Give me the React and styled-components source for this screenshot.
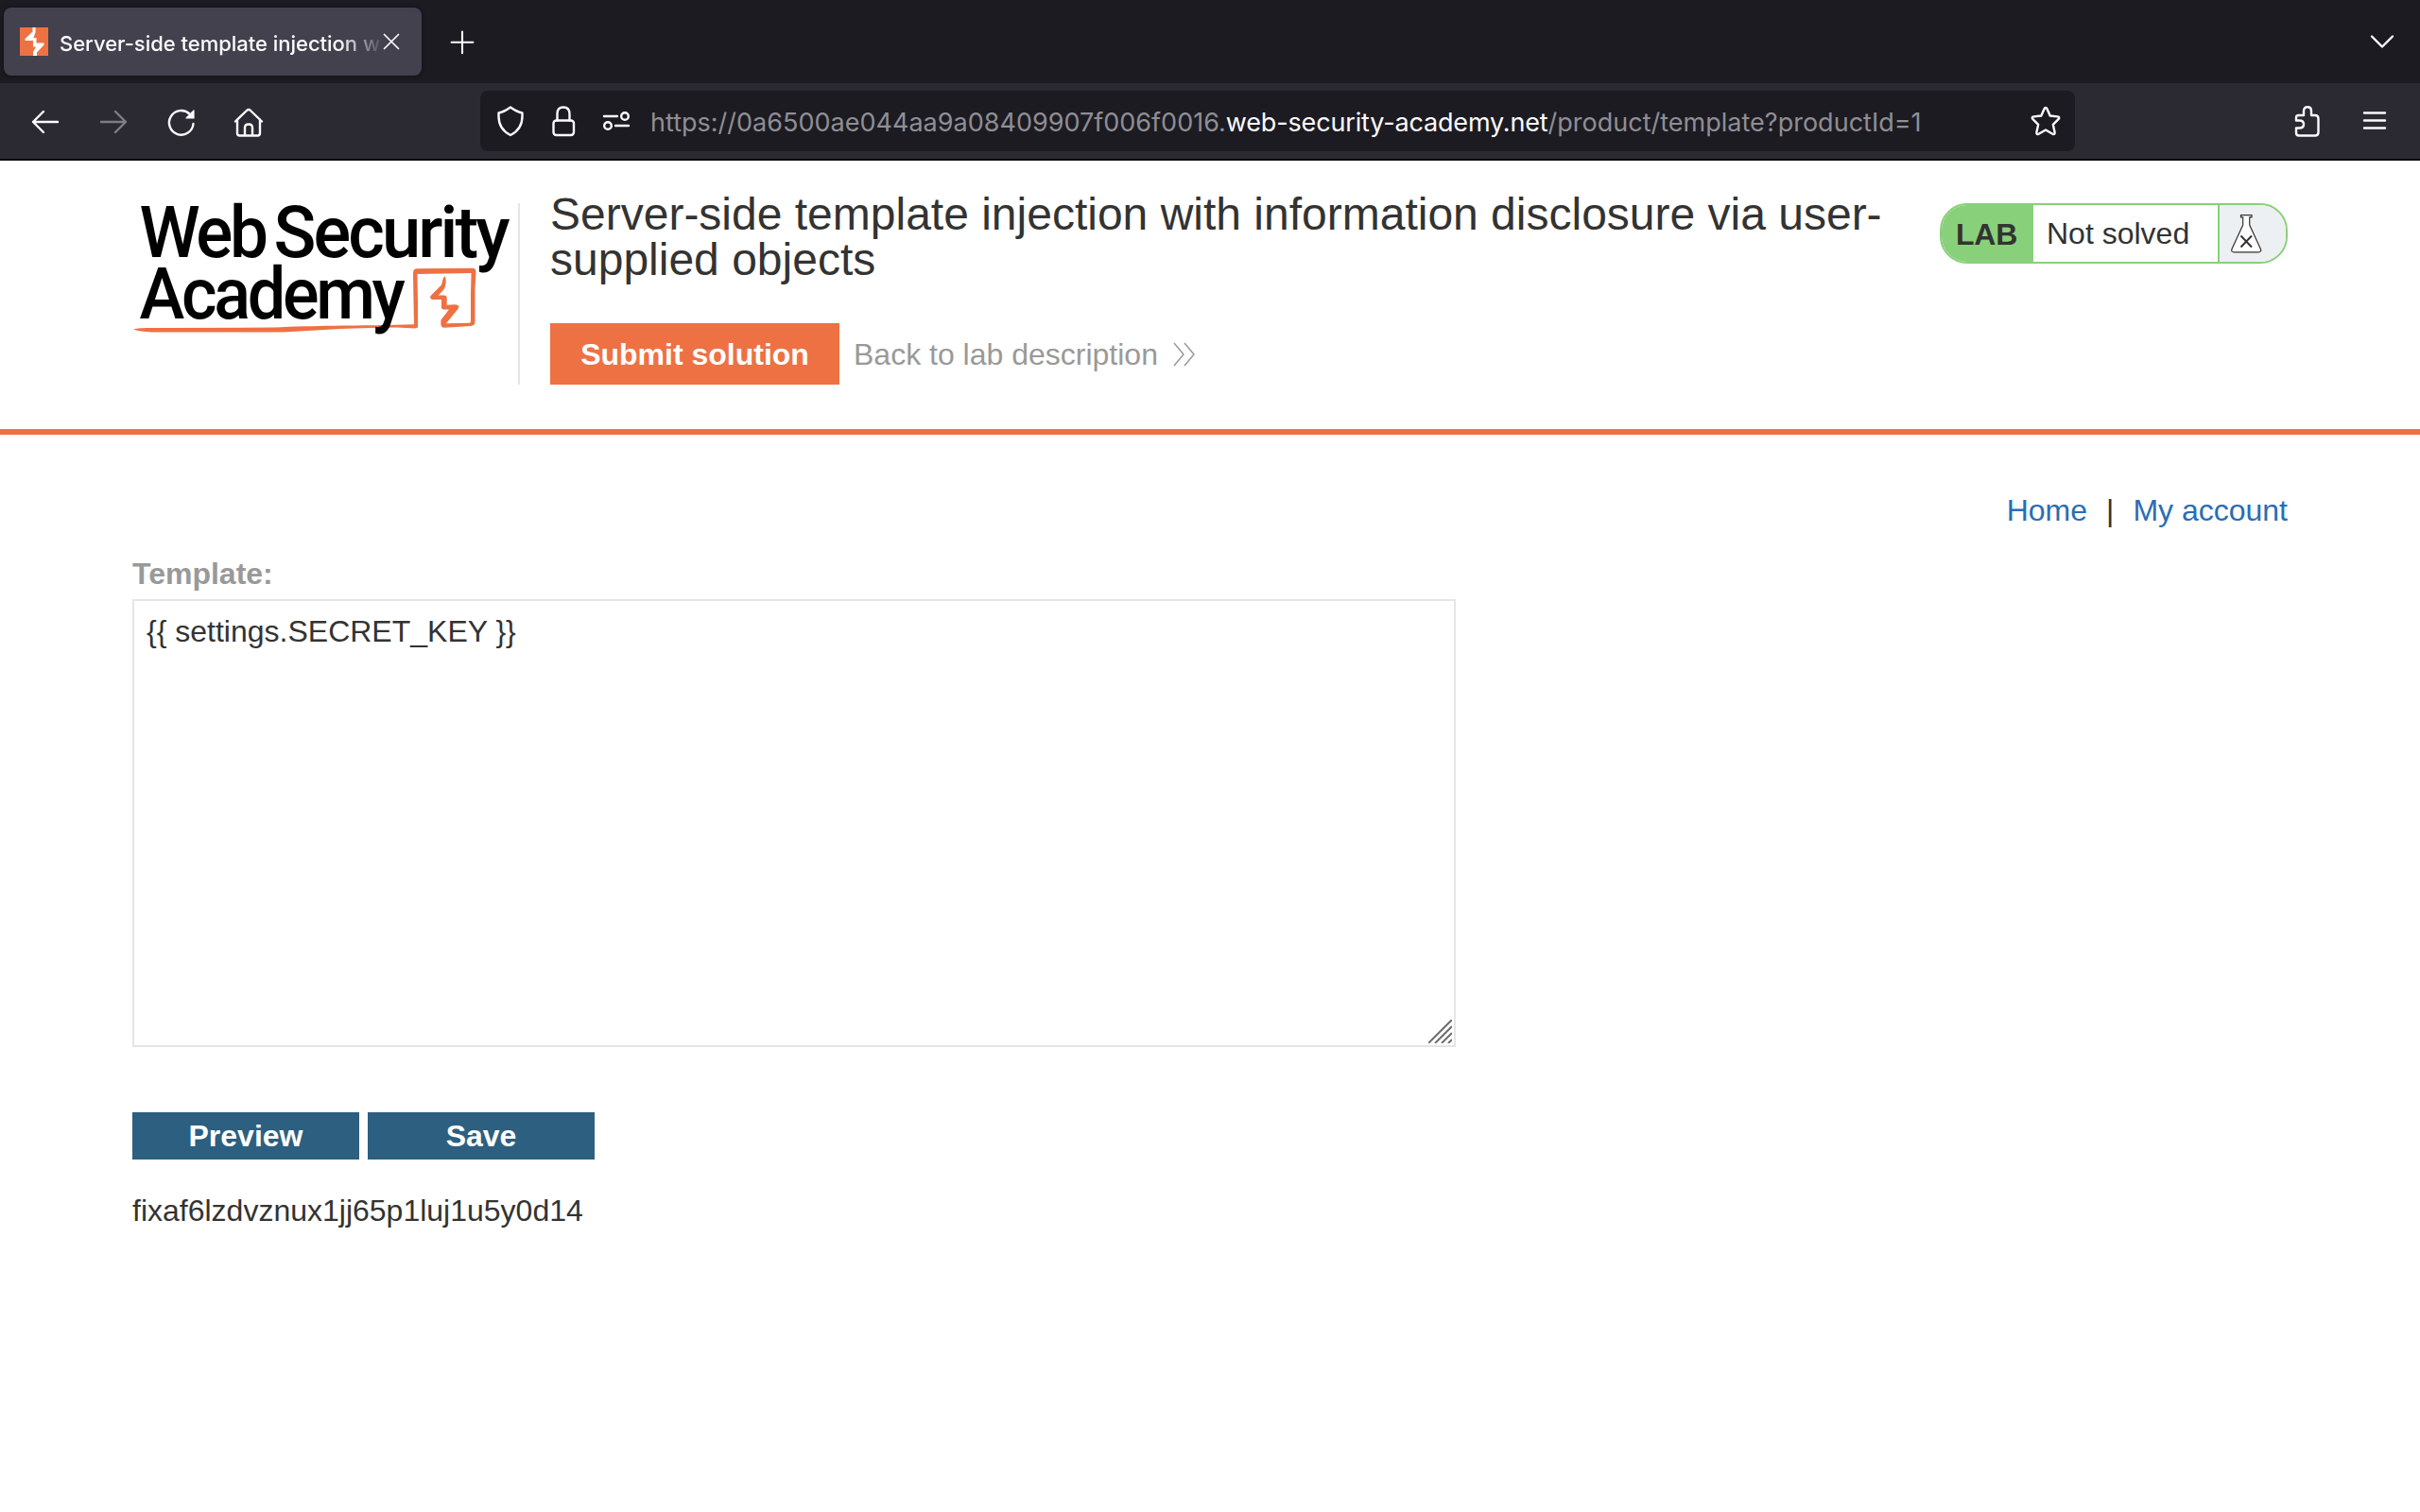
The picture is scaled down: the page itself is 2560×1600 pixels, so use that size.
import React from "react";
import styled, { createGlobalStyle } from "styled-components";

const ORANGE = "#ee7144";
const GREEN = "#89d07a";
const INK = "#333332";

const GlobalStyle = createGlobalStyle`
  *, *::before, *::after { box-sizing: border-box; }
  html, body { margin: 0; padding: 0; background: #fff; }
  body {
    font-family: "Liberation Sans", Arial, sans-serif;
    font-size: 32px;
    line-height: 36px;
    color: ${INK};
  }
  button, textarea { font: inherit; }
  svg { display: block; flex: none; overflow: visible; }
`;

const Window = styled.div`
  width: 2560px;
  height: 1600px;
  display: flex;
  flex-direction: column;
  overflow: hidden;
  background: #fff;
`;

const TabStrip = styled.div`
  height: 88px;
  flex: none;
  display: flex;
  align-items: center;
  padding: 0 24px 0 4px;
  background: #1c1b22;
  color: #fbfbfe;
`;

const Tab = styled.div`
  width: 442px;
  height: 72px;
  display: flex;
  align-items: center;
  padding-left: 17px;
  border-radius: 8px;
  background: #42414d;
  box-shadow: 0 0 4px rgba(0, 0, 0, 0.5);
`;

const TabTitle = styled.span`
  width: 341px;
  height: 30px;
  margin: 4px 0 0 12px;
  overflow: hidden;
  white-space: nowrap;
  font: 500 22px/30px Inter, Roboto, sans-serif;
  letter-spacing: -0.02px;
  mask-image: linear-gradient(to right, #000 296px, transparent 344px);
`;

const NewTab = styled.div`
  margin-left: 30px;
  flex: 1;
`;

const Toolbar = styled.div`
  height: 82px;
  flex: none;
  display: flex;
  align-items: center;
  padding: 0 32px 0 32px;
  background: #2b2a33;
  border-bottom: 2px solid #0c0c0d;
  color: #fbfbfe;
`;

const NavButtons = styled.div`
  display: flex;
  gap: 40px;
  width: 476px;
`;

const AddressBar = styled.div`
  width: 1687px;
  height: 64px;
  display: flex;
  align-items: center;
  padding: 0 15px 0 16px;
  border-radius: 8px;
  background: #1c1b22;
`;

const SiteIcons = styled.div`
  display: flex;
  gap: 24px;
`;

const Address = styled.span`
  flex: 1;
  margin: 4px 0 0 20px;
  white-space: nowrap;
  font: 400 27px/36px Inter, Roboto, sans-serif;
  letter-spacing: 0.01px;
  color: #8f8e94;
`;

const Host = styled.span`
  color: #fbfbfe;
  letter-spacing: -0.16px;
`;

const ToolbarEnd = styled.div`
  flex: 1;
  display: flex;
  justify-content: flex-end;
  gap: 40px;
`;

const Header = styled.header`
  height: 290px;
  flex: none;
  display: flex;
  align-items: flex-start;
  padding: 32px 140px 0 140px;
  border-bottom: 6px solid ${ORANGE};
`;

const LogoBox = styled.div`
  width: 410px;
  height: 192px;
  margin-top: 13px;
  border-right: 2px solid #e5e5e5;
`;

const Headline = styled.div`
  width: 1470px;
  margin-left: 32px;
`;

const Title = styled.h2`
  margin: 1px 0 0;
  font-size: 48px;
  line-height: 48px;
  font-weight: 400;
`;

const Actions = styled.div`
  display: flex;
  align-items: center;
  margin-top: 43px;
`;

const SubmitButton = styled.button`
  width: 306px;
  height: 65px;
  padding: 1px 0 0;
  border: 0;
  background: ${ORANGE};
  color: #fff;
  font-weight: 700;
`;

const BackLink = styled.a`
  display: flex;
  align-items: center;
  gap: 16px;
  margin: 1px 0 0 15px;
  color: #999;
`;

const LabStatus = styled.div`
  width: 368px;
  height: 64px;
  display: flex;
  margin-top: 13px;
  border: 2px solid ${GREEN};
  border-radius: 29px;
  overflow: hidden;
`;

const LabTag = styled.div`
  width: 97px;
  padding: 13px 0 0 15px;
  background: ${GREEN};
  font-weight: 700;
  letter-spacing: -0.2px;
`;

const LabText = styled.div`
  width: 197px;
  padding: 12px 0 0 14px;
  border-right: 2px solid ${GREEN};
`;

const LabIcon = styled.div`
  flex: 1;
  padding: 9px 0 0 12px;
  background: #ecf0f3;
`;

const Main = styled.main`
  flex: 1;
  padding: 62px 140px 0;
  display: flex;
  flex-direction: column;
`;

const TopLinks = styled.nav`
  display: flex;
  justify-content: flex-end;
  gap: 20px;
`;

const Link = styled.a`
  color: #2a6db5;
`;

const Label = styled.label`
  margin-top: 31px;
  font-weight: 700;
  color: #999;
`;

const Editor = styled.div`
  width: 1400px;
  height: 474px;
  margin-top: 9px;
  padding: 14px 2px 2px 13px;
  display: flex;
  flex-direction: column;
  justify-content: space-between;
  border: 2px solid #e5e5e5;
`;

const Grip = styled.svg`
  align-self: flex-end;
  overflow: hidden;
`;

const ButtonRow = styled.div`
  display: flex;
  gap: 9px;
  margin-top: 69px;
`;

const ActionButton = styled.button`
  width: 240px;
  height: 50px;
  padding: 0;
  border: 0;
  background: #2c5f80;
  color: #fff;
  font-weight: 700;
  line-height: 50px;
`;

const Output = styled.div`
  margin-top: 36px;
`;

const Icon = ({ size = 32, width = 2.4, opacity = 1, children }) => (
  <svg
    width={size}
    height={size}
    viewBox="0 0 32 32"
    fill="none"
    stroke="currentColor"
    strokeWidth={width}
    strokeLinecap="round"
    strokeLinejoin="round"
    opacity={opacity}
  >
    {children}
  </svg>
);

const Favicon = () => (
  <svg width="30" height="30" viewBox="0 0 30 30">
    <rect width="30" height="30" fill={ORANGE} />
    <path
      d="M13.500 0h3v5l-2 6h3v5.500h8v2l-7.500 8v3.500h-4v-4l3-5.500h-3v-6.500H5.500v-2l8-7.500z"
      fill="#fff"
    />
  </svg>
);

const Logo = () => (
  <svg width="400" height="150" viewBox="140 215 400 150">
    <path
      fill={ORANGE}
      d="M141 348.500C148 346.500 156 347 180 347L290 346.500C330 344.500 380 344.500 410 344L438 343.300 437.500 320 437 290C437 286 438 284.500 441 284.300L499 283.700C502.500 283.700 503.500 285.500 503.500 288L502.500 305 502.500 340C502.500 343.500 501 344.500 498 345L470 346.700C467.500 346.700 466.300 345 466.300 342.500L466.500 338.500 475 327.500 469.500 327.500C467.500 327.500 466.800 326.500 467 324.500L467 317 459 317C455 317 454 314.500 456.500 312L467 301.500C468 298 468.500 294 470.300 292.300C471.500 293 472 296.500 471.500 300.500C471 304 470 306 468 308L463.700 312.500 469.500 312.500C472 312.500 472.700 313.500 472.700 315.500L472.700 322.700 481 322.300C485.500 322.300 486.500 324.500 484 327.500L472 342.300 497 341.800 498 340 498 310 498.500 289 441.500 290 442 320 442 346.500 438.500 347.500 420 346.500C380 346.500 340 349 300 351.500L160 351.500C152 351 146 350.500 141 348.500Z"
    />
    <g fill="#000" fontFamily="Roboto, sans-serif" fontWeight="500" fontSize="76">
      <text x="147.500" y="272" letterSpacing="-3.500" textLength="133" lengthAdjust="spacingAndGlyphs">Web</text>
      <text x="289.500" y="272" letterSpacing="-3" textLength="247" lengthAdjust="spacingAndGlyphs">Security</text>
      <text x="147.500" y="337" letterSpacing="-3.500" textLength="278" lengthAdjust="spacingAndGlyphs">Academy</text>
    </g>
  </svg>
);

const Flask = () => (
  <svg width="34" height="42" viewBox="0 0 34 42" fill="#fff" stroke={INK} strokeWidth="1.200">
    <path d="M10.500 1.600h11.500v2.200h-2.300V12l11.700 25.500c.8 2.200-.2 3.400-2.200 3.400H3.200c-2 0-3-1.200-2.200-3.400L12.700 12V3.800h-2.200z" />
    <path d="M10.500 23.500l11.500 12M22 23.500l-11.500 12" strokeWidth="2" fill="none" />
  </svg>
);

export default function App() {
  return (
    <Window>
      <GlobalStyle />
      <TabStrip>
        <Tab>
          <Favicon />
          <TabTitle>Server-side template injection w</TabTitle>
          <Icon size={20} width={2.800}>
            <path d="M4 4l24 24M28 4L4 28" />
          </Icon>
        </Tab>
        <NewTab>
          <Icon size={26} width={2.600}>
            <path d="M16 3v28M2 17h28" />
          </Icon>
        </NewTab>
        <Icon>
          <path d="M5 10.500l11 11 11-11" />
        </Icon>
      </TabStrip>

      <Toolbar>
        <NavButtons>
          <Icon>
            <path d="M3 17h26M14 6L3 17l11 11" />
          </Icon>
          <Icon opacity={0.4}>
            <path d="M3 17h26M18 6l11 11-11 11" />
          </Icon>
          <Icon>
            <path d="M28.500 19A12.800 12.800 0 1 1 24.500 8.500" />
            <path d="M29 5v8h-8z" fill="currentColor" strokeWidth="1.200" />
          </Icon>
          <Icon>
            <path d="M1 16.500L13.500 4.500Q15 3.300 16.500 4.500L29 16.500M3 14.500v14.500q0 2.500 2.500 2.500h19q2.500 0 2.500-2.500V14.500M11 31.500v-8.500q0-3.500 4-3.500t4 3.500V31.500" />
          </Icon>
        </NavButtons>
        <AddressBar>
          <SiteIcons>
            <Icon>
              <path d="M16 1.500Q23 6.500 28.500 7.500V11c0 8.500-3.500 15.500-12.500 20C7 26.500 3.500 19.500 3.500 11V7.500Q9 6.500 16 1.500z" />
            </Icon>
            <Icon>
              <rect x="5.500" y="15.500" width="21.500" height="15.500" rx="3" />
              <path d="M9.500 15.500V8.500q0-7 6.500-7t6.500 7v7" />
            </Icon>
            <Icon>
              <path d="M3 11h14M15 21h14" />
              <circle cx="25" cy="11" r="3.800" />
              <circle cx="7" cy="21" r="3.800" />
            </Icon>
          </SiteIcons>
          <Address>
            https://0a6500ae044aa9a08409907f006f0016.<Host>web-security-academy.net</Host>
            /product/template?productId=1
          </Address>
          <Icon>
            <path d="M16 2q1 0 1.500 1.200l3.200 7.300 7.800.9q3 .5 1 2.800l-5.700 5.600 1.800 8.200q.4 3-2.200 1.700L16 25.500l-7.400 4.200q-2.600 1.300-2.200-1.700l1.800-8.200L2.500 14.200q-2-2.300 1-2.800l7.800-.9 3.200-7.300Q15 2 16 2z" />
          </Icon>
        </AddressBar>
        <ToolbarEnd>
          <Icon>
            <path d="M7.500 10H13V5.500Q13 1.300 17 1.300t4 4.200V10h4q3.500 0 3.500 3.500v14.500q0 3.500-3.500 3.500H8q-3 0-3-3V23.500h3.500q4.500 0 4.500-4t-4.500-4H5V12.500Q5 10 7.500 10z" />
          </Icon>
          <Icon>
            <path d="M5 7.500h22M5 15.500h22M5 23.500h22" />
          </Icon>
        </ToolbarEnd>
      </Toolbar>

      <Header>
        <LogoBox>
          <Logo />
        </LogoBox>
        <Headline>
          <Title>
            Server-side template injection with information disclosure via user-
            <br />
            supplied objects
          </Title>
          <Actions>
            <SubmitButton>Submit solution</SubmitButton>
            <BackLink>
              Back to lab description
              <svg width="24" height="24" viewBox="0 0 24 24" fill="none" stroke="#999" strokeWidth="1.500">
                <path d="M1 0l10 12L1 24M12 0l10 12L12 24" />
              </svg>
            </BackLink>
          </Actions>
        </Headline>
        <LabStatus>
          <LabTag>LAB</LabTag>
          <LabText>Not solved</LabText>
          <LabIcon>
            <Flask />
          </LabIcon>
        </LabStatus>
      </Header>

      <Main>
        <TopLinks>
          <Link>Home</Link>
          <span>|</span>
          <Link>My account</Link>
        </TopLinks>
        <Label>Template:</Label>
        <Editor>
          <span>{"{{ settings.SECRET_KEY }}"}</span>
          <Grip width="25" height="25" viewBox="0 0 25 25" stroke="#6e6e6e" strokeWidth="2">
            <path d="M0 25L25 0M7 25L25 7M14 25l11-11M21 25l4-4" />
          </Grip>
        </Editor>
        <ButtonRow>
          <ActionButton>Preview</ActionButton>
          <ActionButton>Save</ActionButton>
        </ButtonRow>
        <Output>fixaf6lzdvznux1jj65p1luj1u5y0d14</Output>
      </Main>
    </Window>
  );
}
